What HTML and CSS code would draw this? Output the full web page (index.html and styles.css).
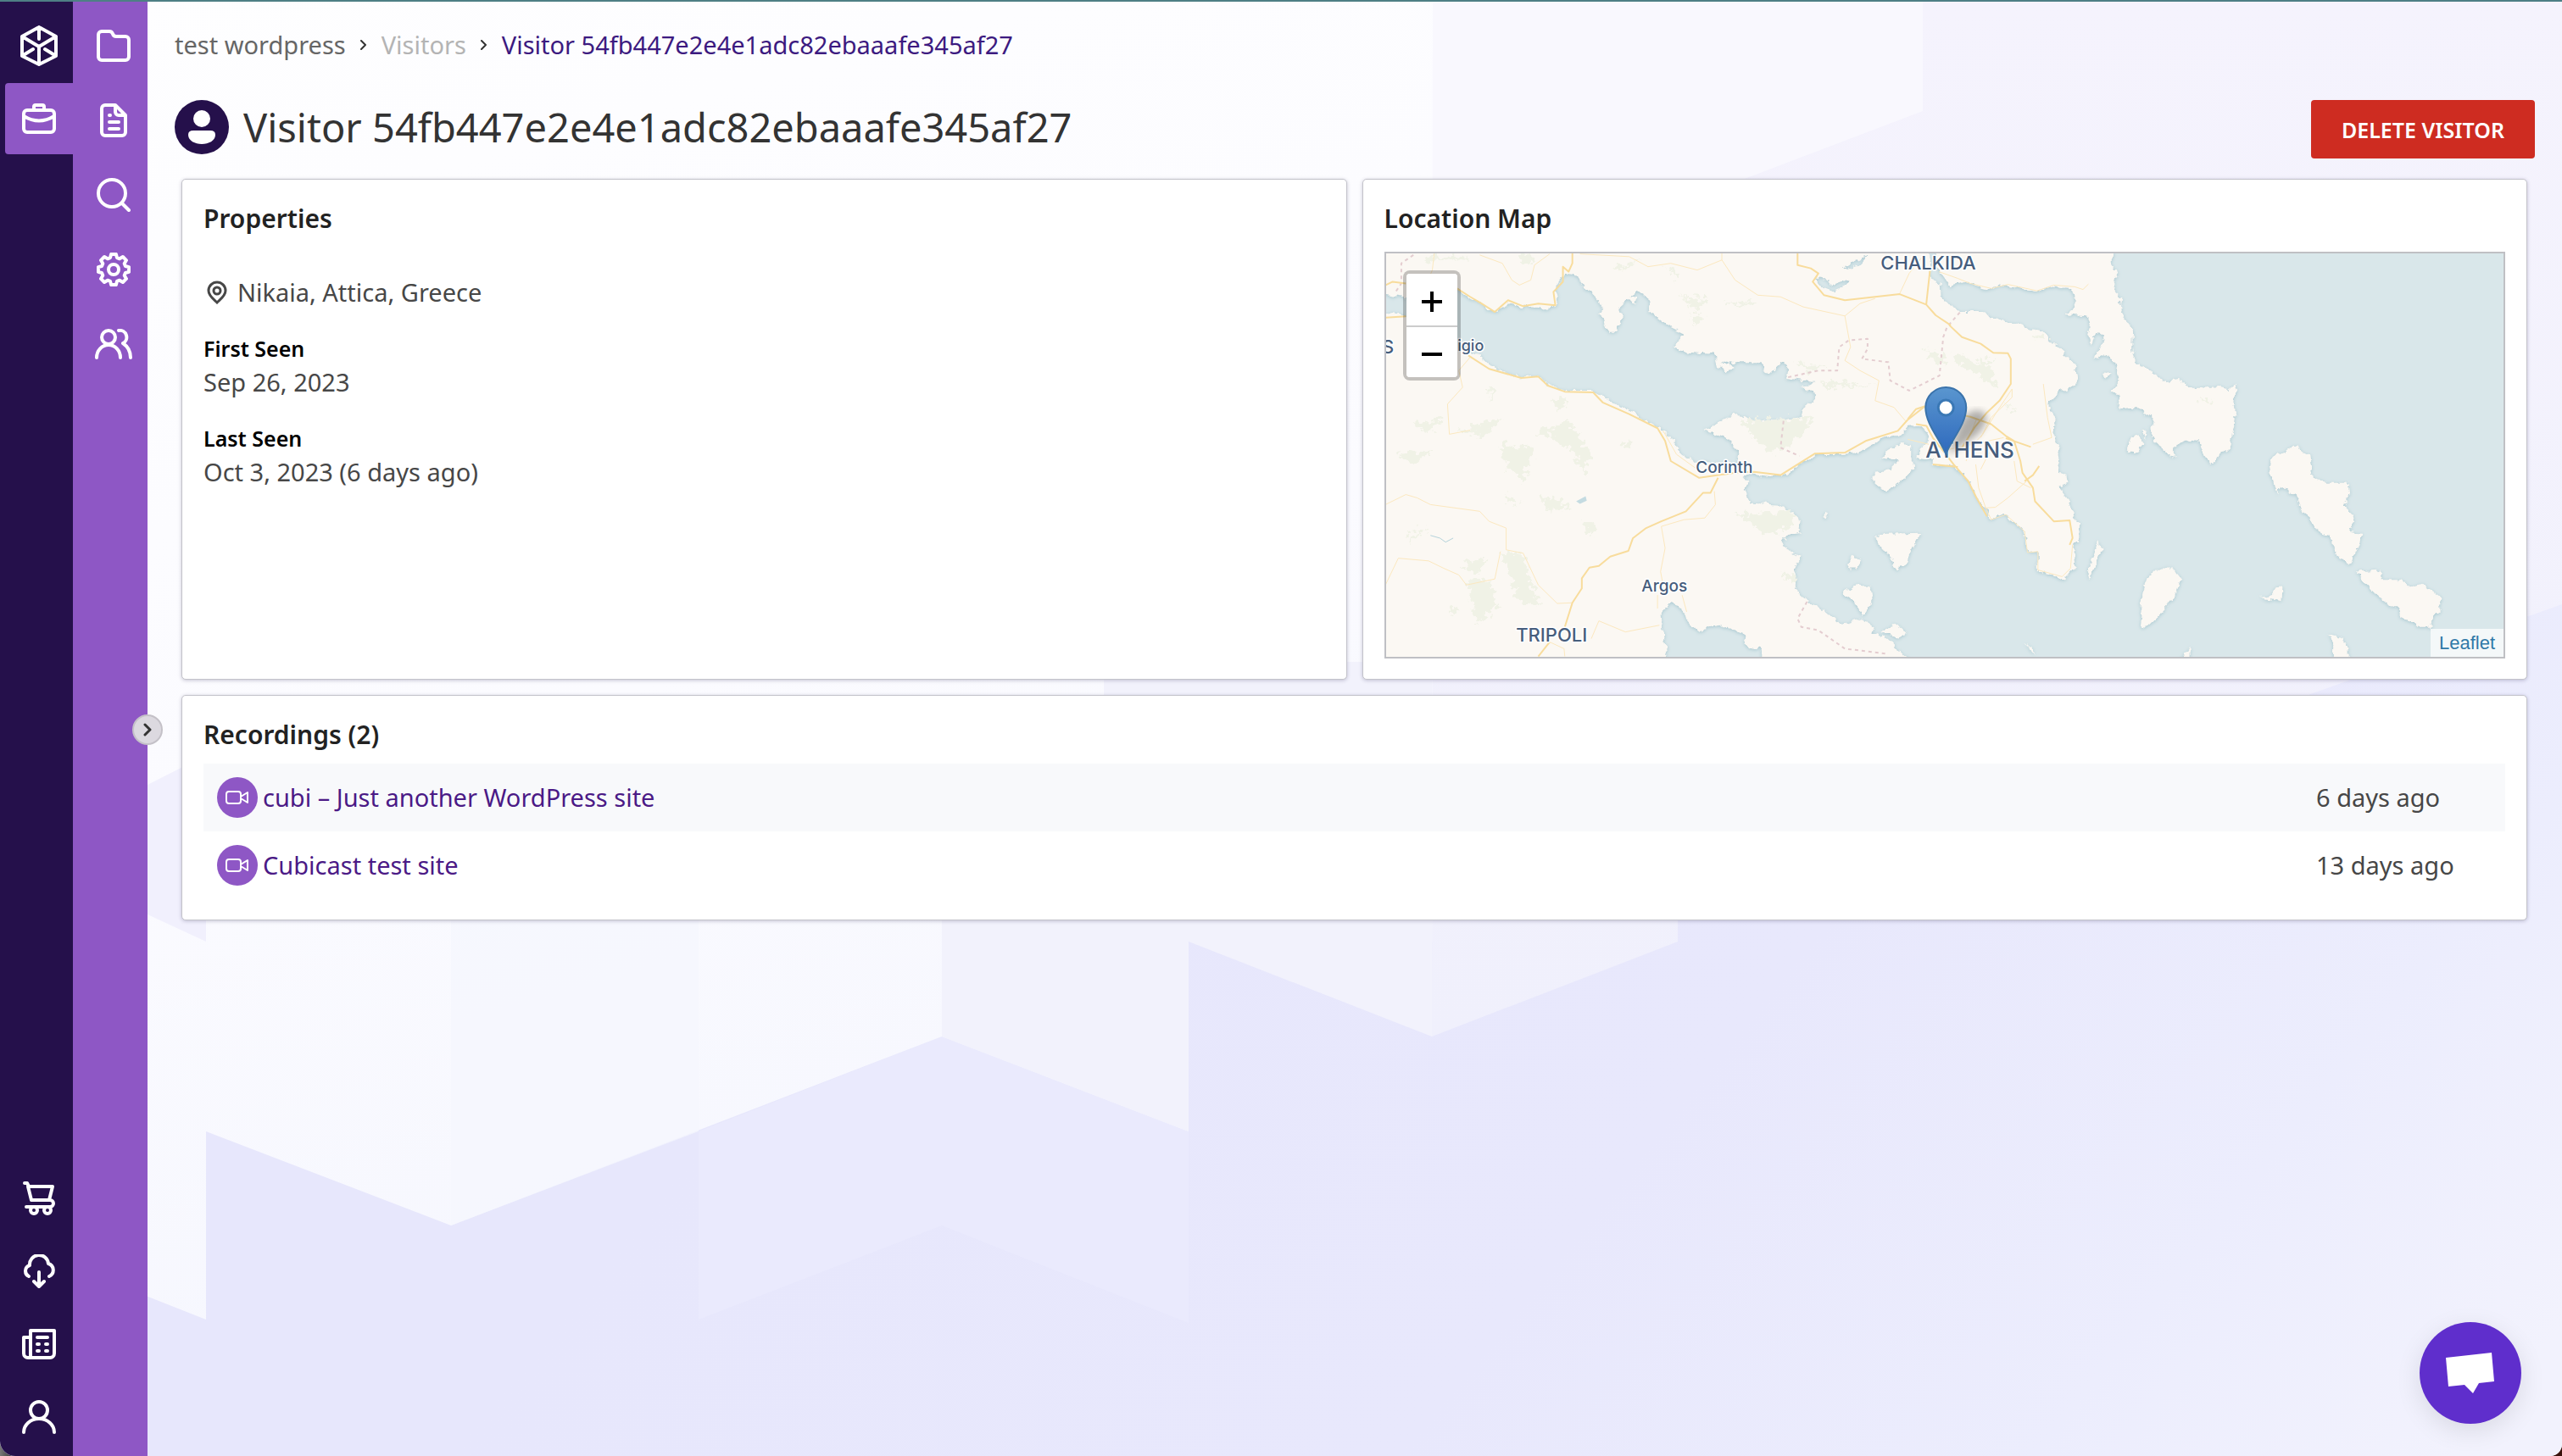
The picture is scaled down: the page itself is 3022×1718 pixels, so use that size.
FILE: index.html
```
<!DOCTYPE html>
<html lang="en">
<head>
<meta charset="utf-8">
<meta name="viewport" content="width=device-width, initial-scale=1">
<title>Visitor 54fb447e2e4e1adc82ebaaafe345af27</title>
<link rel="stylesheet" href="styles.css">
</head>
<body>
<div class="app">
  <svg class="backdrop" viewBox="0 0 3022 1718" preserveAspectRatio="xMidYMid slice" aria-hidden="true">
    <defs>
      <linearGradient id="base" gradientUnits="userSpaceOnUse" x1="1500" y1="500" x2="3022" y2="1718">
        <stop offset="0" stop-color="#e7e7fc"/><stop offset="0.45" stop-color="#e8e8fc"/><stop offset="0.75" stop-color="#ecedfd"/><stop offset="0.95" stop-color="#f2f2fd"/>
      </linearGradient>
      <linearGradient id="sky" x1="0" y1="0" x2="0.3" y2="1">
        <stop offset="0" stop-color="#fefeff"/><stop offset="0.6" stop-color="#fbfbff"/><stop offset="1" stop-color="#f6f7fe"/>
      </linearGradient>
      <linearGradient id="skyRight" x1="0" y1="0" x2="0" y2="1">
        <stop offset="0" stop-color="#f5f3fd"/><stop offset="1" stop-color="#f0f0fc"/>
      </linearGradient>
    </defs>
    <path fill="url(#base)" d="M0 0H3022V1718H0z"/>
    <path fill="#eaeafd" d="M824 1334 1111 1222 1402 1334V1560L1111 1445 824 1556z"/>
    <path fill="url(#sky)" d="M0 0H1690V1110L1402 1110V1334L1111 1222 532 1445 243 1334V1556L0 1460z"/>
    <path fill="#f2f2fc" d="M1111 1085H1402V1334L1111 1222z"/>
    <path fill="#f2f2fc" d="M1302 1075 1402 1110 1689 1222V780H1302z"/>
    <path fill="url(#skyRight)" d="M1690 0H3022V712L1979 1085V1110L1689 1222z"/>
    <path fill="#f9f8fe" d="M1690 0H2268V130L1690 350z"/>
    <path fill="#f1f0fd" d="M174 925 243 890V1110L174 1078z"/>
    <path fill="#f5f6fd" d="M532 1085H824V1334L532 1445z" opacity="0.7"/>
  </svg>

  <nav class="rail" aria-label="Workspace">
    <a class="rail-logo" href="#" aria-label="Home">
      <svg class="icon" width="46" height="48" viewBox="0 0 46 48"><path d="M23 2 43 13V36L23 46 3 36V13zM3 13 23 25 43 13M23 25V46M23 2V16M3 36 16 28M43 36 30 28"/></svg>
    </a>
    <a class="rail-tab" href="#" aria-label="Projects">
      <svg class="icon" width="40" height="36" viewBox="0 0 40 36"><path d="M6 8H34A4 4 0 0 1 38 12V30A4 4 0 0 1 34 34H6A4 4 0 0 1 2 30V12A4 4 0 0 1 6 8zM14 8V4A2 2 0 0 1 16 2H24A2 2 0 0 1 26 4V8M2 15Q20 26 38 15"/></svg>
    </a>
    <div class="rail-bottom">
      <a class="rail-item" href="#" aria-label="Billing"><svg class="icon" width="40" height="40" viewBox="0 0 40 40"><path d="M3 2H6L8 6H36L32 22H11L7 6M32 22H33A4 4 0 0 1 33 30H5"/><circle cx="14" cy="34" r="4"/><circle cx="30" cy="34" r="4"/></svg></a>
      <a class="rail-item" href="#" aria-label="Downloads"><svg class="icon" width="40" height="40" viewBox="0 0 40 40"><path d="M8 26A7 7 0 0 1 9 13A11 11 0 0 1 31 11A8 8 0 0 1 32 26M20 21V37M14 32 20 38 26 32"/></svg></a>
      <a class="rail-item" href="#" aria-label="News"><svg class="icon" width="40" height="36" viewBox="0 0 40 36"><path d="M10 34V2H38V29A5 5 0 0 1 33 34H7A5 5 0 0 1 2 29V10H10M18 10H30M18 18H20M28 18H30M18 26H20M28 26H30"/></svg></a>
      <a class="rail-item" href="#" aria-label="Account"><svg class="icon" width="40" height="40" viewBox="0 0 40 40"><circle cx="20" cy="12" r="10"/><path d="M2 38A18 16 0 0 1 38 38"/></svg></a>
    </div>
  </nav>

  <nav class="subrail" aria-label="Project">
    <a class="subrail-item" href="#" aria-label="Files"><svg class="icon" width="40" height="38" viewBox="0 0 40 38"><path d="M6 2H15Q18 2 19 5T23 8H34A4 4 0 0 1 38 12V32A4 4 0 0 1 34 36H6A4 4 0 0 1 2 32V6A4 4 0 0 1 6 2z"/></svg></a>
    <a class="subrail-item" href="#" aria-label="Documents"><svg class="icon" width="32" height="40" viewBox="0 0 32 40"><path d="M6 2H18L30 14V34A4 4 0 0 1 26 38H6A4 4 0 0 1 2 34V6A4 4 0 0 1 6 2zM18 2V10A4 4 0 0 0 22 14H30M11 14H12M11 22H22M11 30H22"/></svg></a>
    <a class="subrail-item" href="#" aria-label="Search"><svg class="icon" width="40" height="40" viewBox="0 0 40 40"><circle cx="18" cy="18" r="16"/><path d="M30 30 38 38"/></svg></a>
    <a class="subrail-item" href="#" aria-label="Settings"><svg class="icon" width="40" height="40" viewBox="-20 -20 40 40"><path d="M-4-13.9-2.9-18.1H2.9L4-13.9 7-12.7 10.9-15 15-10.9 12.7-7 13.9-4 18.1-2.9V2.9L13.9 4 12.7 7 15 10.9 10.9 15 7 12.7 4 13.9 2.9 18.1H-2.9L-4 13.9-7 12.7-10.9 15-15 10.9-12.7 7-13.9 4-18.1 2.9V-2.9L-13.9-4-12.7-7-15-10.9-10.9-15-7-12.7z"/><circle r="6"/></svg></a>
    <a class="subrail-item" href="#" aria-label="Team"><svg class="icon" width="44" height="36" viewBox="0 0 44 36"><circle cx="16" cy="10" r="8"/><path d="M2 34A14 15 0 0 1 30 34M28 2A8 8 0 0 1 33 17Q42 23 42 34"/></svg></a>
    <button class="expand" type="button" aria-label="Expand menu"><svg width="10" height="16" viewBox="0 0 10 16"><path d="M2 2 8 8 2 14"/></svg></button>
  </nav>

  <main class="main">
    <nav class="crumbs" aria-label="Breadcrumb">
      <a class="crumb" href="#">test wordpress</a>
      <svg class="crumb-sep" width="8" height="12" viewBox="0 0 8 12"><path d="M1 1 6 6 1 11"/></svg>
      <a class="crumb crumb-muted" href="#">Visitors</a>
      <svg class="crumb-sep" width="8" height="12" viewBox="0 0 8 12"><path d="M1 1 6 6 1 11"/></svg>
      <a class="crumb crumb-current" href="#" aria-current="page">Visitor 54fb447e2e4e1adc82ebaaafe345af27</a>
    </nav>

    <header class="page-head">
      <svg width="64" height="64" viewBox="0 0 64 64" aria-hidden="true"><circle cx="32" cy="32" r="32" fill="#25104b"/><circle cx="32" cy="22" r="10" fill="#fff"/><path fill="#fff" d="M22 36H42Q48 36 48 41C48 48 40 52 32 52S16 48 16 41Q16 36 22 36z"/></svg>
      <h1 class="page-title">Visitor 54fb447e2e4e1adc82ebaaafe345af27</h1>
      <button class="delete" type="button">DELETE VISITOR</button>
    </header>

    <div class="cards">
      <section class="card">
        <h2 class="card-title">Properties</h2>
        <p class="place"><svg width="24" height="28" viewBox="0 0 24 28" aria-hidden="true"><path d="M12 2A10 10 0 0 1 22 12C22 18 16 22 12 26C8 22 2 18 2 12A10 10 0 0 1 12 2z"/><circle cx="12" cy="12" r="4"/></svg>Nikaia, Attica, Greece</p>
        <dl class="facts">
          <dt>First Seen</dt><dd>Sep 26, 2023</dd>
          <dt>Last Seen</dt><dd>Oct 3, 2023 (6 days ago)</dd>
        </dl>
      </section>

      <section class="card">
        <h2 class="card-title">Location Map</h2>
        <div class="map">
          <svg class="map-art" viewBox="0 0 1320 476" preserveAspectRatio="xMidYMid slice" role="img" aria-label="Map centred on Athens">
            <defs>
              <filter id="coast" x="-2%" y="-2%" width="104%" height="104%">
                <feTurbulence type="fractalNoise" baseFrequency="0.11" numOctaves="3" seed="4" result="n"/>
                <feDisplacementMap in="SourceGraphic" in2="n" scale="9" xChannelSelector="R" yChannelSelector="G" result="land"/>
                <feDropShadow in="land" dx="0" dy="1" stdDeviation="2" flood-color="#a9c8d0"/>
              </filter>
              <filter id="rough" x="-5%" y="-5%" width="110%" height="110%">
                <feTurbulence type="fractalNoise" baseFrequency="0.06" numOctaves="3" seed="9" result="n"/>
                <feDisplacementMap in="SourceGraphic" in2="n" scale="46" xChannelSelector="R" yChannelSelector="G"/>
              </filter>
              <filter id="soft"><feGaussianBlur stdDeviation="4"/></filter>
              <linearGradient id="pin" x1="0" y1="0" x2="0" y2="1"><stop offset="0" stop-color="#5a96cf"/><stop offset="1" stop-color="#2e69bd"/></linearGradient>
            </defs>
            <path fill="#d9e7ea" d="M0 0H1320V476H0z"/>
            <g filter="url(#coast)" fill="#fbf8f3">
              <g transform="translate(-34 -99) scale(.4464 .3954)">
                <path fill-rule="evenodd" d="M40 220H1500V765L1455 768 1430 795 1400 795 1350 830 1330 845 1280 850 1210 850 1130 915 1085 915 1050 908 1020 912 1040 928 1025 955 1040 995 1110 1000 1150 1020 1172 1050 1170 1085 1140 1090 1125 1110 1135 1135 1170 1155 1155 1190 1165 1215 1160 1255 1190 1285 1240 1320 1280 1360 1320 1345 1335 1340 1365 1365 1360 1385 1395 1395 1430 1430 1470 1480H1075L1065 1425 1035 1435 1020 1385 975 1360 920 1370 905 1380 870 1340 860 1305 830 1295 803 1325 805 1360 815 1400 823 1480H40z
                M40 365 95 375 130 383 150 350 265 360 300 385 330 400 365 430 400 400 440 410 520 415 535 380 525 360 550 310 580 315 600 345 620 370 650 405 640 430 655 445 665 485 690 485 690 465 705 445 695 410 720 385 735 405 740 385 725 380 745 365 770 380 780 430 820 465 865 490 840 530 870 545 930 550 945 545 955 595 975 570 1000 575 1065 575 1090 612 1125 575 1145 600 1135 622 1210 635 1175 655 1205 665 1210 690 1180 715 1175 735 1100 755 1050 750 1010 735 995 730 915 780 970 795 1010 840 1002 875 890 872 850 835 830 800 790 765 750 740 690 700 620 660 550 660 500 640 480 615 435 620 385 600 350 585 320 550 265 530 130 435 95 425 40 440z
                M1210 320 1240 325 1255 345 1305 325 1290 350 1260 365 1225 350zM1285 295 1320 270 1350 262 1330 285 1290 300z"/>
                <path d="M1435 818 1465 825 1465 865 1470 890 1440 930 1400 960 1365 935 1365 905 1410 895 1435 870 1430 860 1385 865 1400 840zM1375 1090 1490 1087 1465 1140 1450 1185 1425 1192 1410 1150 1385 1135zM1310 1155 1333 1165 1320 1190 1298 1190zM1285 1265 1320 1240 1360 1245 1365 1280 1345 1320 1335 1333 1320 1295zM1385 1380 1420 1355 1455 1380 1430 1395zM960 585 985 575 1000 595 975 600zM1228 1035 1245 1025 1238 1040z"/>
                <g transform="translate(1456 0) scale(1.103 1)">
                  <path d="M-30 240H50L55 330 78 340 80 380 95 400 130 425 185 425 195 440 215 440 235 458 270 465 290 475 325 485 350 520 385 560 405 585 395 600 408 620 395 650 370 660 340 695 340 720 352 740 350 790 360 830 365 870 360 905 380 910 385 935 360 945 385 985 390 1010 400 1040 412 1055 410 1110 397 1120 403 1185 385 1205 375 1220 340 1210 312 1200V1140L287 1143 280 1080 265 1060 235 1030 215 1030 200 1050 187 1010 165 980 148 930 120 895 100 885 60 880V865L25 860 28 835 45 815 50 790 30 765-30 765z"/>
                  <path d="M68 220H492L488 270 502 320 490 355 512 380 508 420 540 480 538 540 550 580 595 610 610 635 645 627 690 655 750 650 770 655 790 635 780 690 785 750 770 830 725 875 705 840 700 815 665 803 640 825 638 860 600 825 582 780 592 750 560 715 505 710 510 680 488 665 508 630 495 570 470 550 445 565 470 510 468 490 450 488 440 520 430 490 440 465 435 440 375 432 400 415 398 370 390 355 350 348 310 365 270 355 220 345 200 358 130 333 100 345 80 310 68 290z"/>
                  <path d="M527 840 535 800 555 795 563 820 550 843zM563 780 572 778 568 802zM468 608 482 610 474 630zM865 880 870 860 935 822 938 840 965 855 972 920 1000 935H1055L1058 970 1045 1000 1073 1035 1060 1080 1090 1085 1075 1140 1055 1180 1030 1150 1010 1090 985 1080 965 1040 945 1020 930 975 895 950 882 965zM1075 1200 1130 1195 1140 1225H1180L1200 1245 1235 1240 1280 1275 1275 1310 1260 1330 1255 1365H1230L1180 1335 1175 1310 1130 1280 1100 1240zM555 1300 575 1220 600 1190H635L655 1220 640 1275 600 1330 565 1372 558 1365 562 1310zM840 1278 870 1270 880 1250 900 1248 898 1288zM460 1105 464 1135 437 1222 432 1195zM1005 1388 1045 1400 1055 1430V1480H1018L1020 1410zM645 1480 675 1425V1480zM282 1412 308 1443 295 1440z"/>
                </g>
              </g>
            </g>
            <g class="woods" filter="url(#rough)" transform="translate(-34 -99) scale(.4464 .3954)">
              <path d="M180 260h110v12h-110zM430 255h40v25h-40zM680 290 760 270 700 300zM815 290 860 310 850 330zM860 380 930 385 900 430zM980 395h80v8h-80zM880 430 920 440 890 460zM270 780 380 740 340 800zM480 780 560 750 620 850 600 910 570 840zM380 820 470 830 440 930 400 890zM110 850 200 840 150 880zM150 760 230 740 190 790zM490 970 580 1010 500 1020zM390 960 430 1000 400 1000zM600 1050 630 1060 620 1100zM1010 750 1210 740 1150 820 1090 850zM1000 1030 1160 1020 1150 1060 1090 1090zM1150 580 1250 590 1200 600zM1220 630 1370 645 1240 650zM1500 540 1560 550 1540 590zM130 1090 190 1070 140 1110zM280 1170 350 1160 310 1210zM380 1140 440 1150 480 1300 430 1290zM290 1230 350 1220 370 1300 320 1360zM240 1300 270 1310 250 1330zM520 690 560 680 530 730zM350 650h10v30h-10zM1120 1200 1160 1210 1150 1240zM700 810h20v20h-20z"/>
              <path d="M1570 560 1600 555 1680 600 1690 650 1620 600zM1640 560 1680 570 1660 590zM1710 700 1740 710 1720 720zM1790 490h30v12h-30zM2225 680 2270 690 2240 695z"/>
            </g>
            <g transform="translate(-34 -99) scale(.4464 .3954)">
              <path class="water" d="M580 990 605 975 608 988 590 998z"/>
              <path class="stream" d="M195 1092 220 1100 235 1112 255 1100"/>
              <path class="border" d="M150 255 118 280 118 340 100 370M1140 620 1220 600 1270 600 1275 530 1300 510 1350 505 1350 535 1335 565 1405 575 1410 630 1460 660 1540 615 1550 500 1560 470 1595 425M1128 750 1120 830 1170 855M1190 1290 1165 1340 1175 1365 1220 1375 1290 1430 1400 1445"/>
              <path class="lane" d="M205 250 200 300 185 340M325 255 385 280 410 330 430 345 460 330 470 285 510 252M590 252 720 260 770 290 830 280 900 300 965 270 1000 330 1060 375 1120 380 1180 410 1290 437 1330 400 1370 385M1290 437 1305 530 1290 570 1330 600 1380 630 1370 690 1420 710 1450 750M965 250V270M1435 370 1460 310 1495 260M76 1000 130 970 160 980 195 1000 325 1020 350 1050 395 1070V1135L440 1145 480 1240 530 1295 570 1293M76 1240 110 1160 190 1168 230 1190 270 1210 290 1240 365 1222 380 1140M300 560 270 600 280 650 240 700 245 790 300 778M945 960 948 1000 920 1040 865 1045 805 1065 815 1130 803 1200 808 1230M795 1270 795 1310M860 1270 872 1320M550 1453 548 1430 510 1410M620 1400 640 1347 710 1380 800 1360M810 780 845 850 900 895"/>
              <path class="road" d="M76 345 95 335 130 340M265 355 300 380 330 400 365 425 400 390 440 408 480 400 525 405 520 365 545 335 545 290 560 305 570 280V250M76 442 130 438M295 555 350 595 435 622 480 618 505 645 550 663 625 665 650 695 720 730 795 772 815 810 830 870 905 920 1000 905 1050 902 1120 912 1210 848 1290 845 1345 810 1430 780 1455 748 1500 708M955 920 935 965 915 965 870 1020 805 1050 765 1070 730 1100 718 1138 670 1155 640 1183 615 1188 595 1220 595 1250 570 1293 550 1365M510 1410 480 1453M1165 250V285L1200 295 1220 310 1205 335 1235 375 1290 390 1435 372 1505 403 1515 300M1505 403 1530 435 1570 465"/>
              <g transform="translate(1456 0) scale(1.103 1)">
                <path class="lane" d="M75 305 120 325 150 340 200 355 240 343 310 362 350 345 400 350 420 358 433 342M325 640 335 740 345 800 300 820M250 655 215 720 180 790 150 830 140 870M165 745 140 820M250 655V680L200 740 175 800M0 805 100 835 230 800M163 880 170 950 187 1010 210 1008 240 980 285 930M255 870 262 930 295 950M195 845 175 895M312 1140 287 1143 280 1080 235 1030 200 1045 187 1010M312 1140V1195L370 1215 390 1190 395 1120"/>
                <path class="road" d="M100 465 130 500 175 520 205 547 240 548 247 565V640L220 690 190 725 160 770 130 830M0 745 20 715 45 705 100 725 150 738 200 760 235 795 255 810 270 870 275 905 300 950 305 990 350 1050 388 1047 395 1100 388 1120M235 802 295 828M315 885 300 912 280 930M20 760 45 765 60 800 110 880 145 930 165 980 190 1035M60 880 120 888"/>
              </g>
            </g>
            <g class="places">
              <text x="10" y="118" text-anchor="end" font-size="22">S</text>
              <text x="116" y="115" text-anchor="end" font-size="18">Aigio</text>
              <text x="584" y="19" font-size="22">CHALKIDA</text>
              <text x="366" y="259" font-size="19">Corinth</text>
              <text x="302" y="399" font-size="19">Argos</text>
              <text x="154" y="458" font-size="22">TRIPOLI</text>
              <text x="637" y="241" font-size="26">ATHENS</text>
            </g>
            <path filter="url(#soft)" fill="#000" opacity=".3" d="M663 238 680 196Q694 180 706 188 714 198 698 214z"/>
            <path fill="url(#pin)" stroke="#3a73ab" stroke-width="2" d="M661 237C656 222 637 202 637 182A24 24 0 0 1 685 182C685 202 666 222 661 237z"/>
            <circle cx="661" cy="182" r="9" fill="#fff" stroke="#3a78b5" stroke-width="3"/>
          </svg>
          <div class="zoom">
            <button class="zoom-btn" type="button" aria-label="Zoom in"><svg width="26" height="26" viewBox="0 0 26 26"><path d="M13 1V25M1 13H25"/></svg></button>
            <button class="zoom-btn" type="button" aria-label="Zoom out"><svg width="26" height="26" viewBox="0 0 26 26"><path d="M1 13H25"/></svg></button>
          </div>
          <a class="credit" href="#">Leaflet</a>
        </div>
      </section>

      <section class="card card-wide">
        <h2 class="card-title">Recordings (2)</h2>
        <table class="records">
          <tbody>
            <tr>
              <td><a class="record" href="#"><svg width="48" height="48" viewBox="0 0 48 48" aria-hidden="true"><circle cx="24" cy="24" r="24" fill="#8e57c5"/><path d="M14 17H25Q28 17 28 20V28Q28 31 25 31H14Q11 31 11 28V20Q11 17 14 17zM28 23 36 18V30L28 25"/></svg>cubi – Just another WordPress site</a></td>
              <td class="when">6 days ago</td>
            </tr>
            <tr>
              <td><a class="record" href="#"><svg width="48" height="48" viewBox="0 0 48 48" aria-hidden="true"><circle cx="24" cy="24" r="24" fill="#8e57c5"/><path d="M14 17H25Q28 17 28 20V28Q28 31 25 31H14Q11 31 11 28V20Q11 17 14 17zM28 23 36 18V30L28 25"/></svg>Cubicast test site</a></td>
              <td class="when">13 days ago</td>
            </tr>
          </tbody>
        </table>
      </section>
    </div>
  </main>

  <button class="chat" type="button" aria-label="Open chat"><svg width="60" height="50" viewBox="0 0 60 50"><path fill="#fff" d="M1 7 55 1 58 35 40 37 33 49 23 39 4 41z"/></svg></button>
</div>
</body>
</html>
```
FILE: styles.css
```
* { box-sizing: border-box; }

html {
  min-height: 100%;
  background: linear-gradient(90deg, #777 0, #222 20px, #3a120c 100%);
}

body {
  margin: 0;
  font-family: "Noto Sans", "Open Sans", sans-serif;
  font-size: 29px;
  line-height: 40px;
  color: #474747;
}

a { color: inherit; text-decoration: none; }
button { font: inherit; cursor: pointer; }
svg { display: block; flex: none; }
h1, h2, p, dl, dd { margin: 0; }

.app {
  position: relative;
  display: flex;
  min-height: 100vh;
  border-top: 2px solid #4e7f85;
  border-radius: 0 0 14px 18px;
  overflow: hidden;
  background: #f3f3fd;
}

.backdrop { position: absolute; inset: 0; width: 100%; height: 100%; }

.icon {
  fill: none;
  stroke: #fff;
  stroke-width: 4;
  stroke-linecap: round;
  stroke-linejoin: round;
}

/* Primary rail */
.rail {
  position: relative;
  display: flex;
  flex-direction: column;
  width: 86px;
  background: #25104b;
}
.rail-logo, .rail-tab, .rail-item, .subrail-item {
  display: flex;
  align-items: center;
  justify-content: center;
}
.rail-logo { height: 96px; padding: 8px 0 0 6px; }
.rail-tab {
  height: 84px;
  margin-left: 6px;
  border-radius: 4px 0 0 4px;
  background: #8e57c5;
}
.rail-bottom { margin-top: auto; padding-bottom: 3px; }
.rail-item { height: 86px; padding-left: 6px; }

/* Project rail */
.subrail {
  position: relative;
  z-index: 1;
  width: 88px;
  padding-top: 8px;
  background: #8e57c5;
}
.subrail-item { height: 88px; padding-left: 8px; }
.expand {
  position: absolute;
  top: 841px;
  right: -18px;
  display: flex;
  align-items: center;
  justify-content: center;
  width: 36px;
  height: 36px;
  padding: 0;
  border: 2px solid #c4c1c8;
  border-radius: 50%;
  background: #dcd9e0;
}
.expand path, .crumb-sep path {
  fill: none;
  stroke: #333;
  stroke-width: 3;
  stroke-linecap: round;
  stroke-linejoin: round;
}
.crumb-sep path { stroke-width: 2; }

/* Page */
.main {
  position: relative;
  flex: 1;
  min-width: 0;
  padding: 31px 32px 40px;
}
.crumbs { display: flex; align-items: center; gap: 17px; }
.crumb { color: #666; }
.crumb-muted { color: #b4b4b4; }
.crumb-current { color: #3c1a80; }

.page-head {
  display: flex;
  align-items: flex-start;
  gap: 17px;
  margin: 45px 0 24px;
}
.page-title {
  flex: 1;
  font-size: 47px;
  line-height: 64px;
  font-weight: 400;
  color: #333;
}
.delete {
  height: 69px;
  padding: 0 36px;
  border: 0;
  border-radius: 4px;
  background: #ce2c21;
  color: #fff;
  font-size: 25px;
  font-weight: 600;
}

.cards {
  display: grid;
  grid-template-columns: 1fr 1fr;
  gap: 18px;
  margin: 0 9px 0 8px;
}
.card {
  padding: 26px 25px 24px;
  border: 1px solid #c3c3ca;
  border-radius: 5px;
  background: #fff;
  box-shadow: 0 1px 4px rgba(40, 30, 80, 0.25);
}
.card-wide { grid-column: 1 / -1; }
.card-title {
  font-size: 30px;
  line-height: 40px;
  font-weight: 600;
  color: #222;
}

.place {
  display: flex;
  align-items: center;
  gap: 12px;
  margin-top: 47px;
  padding-left: 4px;
}
.place svg { fill: none; stroke: #474747; stroke-width: 3; }

.facts dt {
  margin-top: 26px;
  font-size: 25px;
  font-weight: 600;
  color: #000;
}
.facts dd { margin-bottom: 26px; }

/* Map */
.map {
  position: relative;
  height: 480px;
  margin-top: 19px;
  border: 2px solid #bfc0c4;
  overflow: hidden;
}
.map-art { width: 100%; height: 100%; }
.woods { fill: #f0f2e6; }
.water { fill: #c4dbe1; }
.stream, .border, .lane, .road {
  fill: none;
  stroke-linejoin: round;
  vector-effect: non-scaling-stroke;
}
.stream { stroke: #b5d3db; stroke-width: 1; }
.border { stroke: #e4cdd0; stroke-width: 2; stroke-dasharray: 4 4; }
.lane { stroke: #fbe8bf; stroke-width: 1; }
.road { stroke: #f8dc9c; stroke-width: 2; }
.places {
  font-family: Inter, "Open Sans", sans-serif;
  font-weight: 500;
  fill: #465d7c;
  stroke: #fff;
  stroke-width: 3;
  stroke-linejoin: round;
  paint-order: stroke;
}
.zoom {
  position: absolute;
  top: 20px;
  left: 20px;
  width: 68px;
  border: 4px solid rgba(0, 0, 0, 0.22);
  border-radius: 8px;
  background-clip: padding-box;
  background-color: #fff;
}
.zoom-btn {
  display: flex;
  align-items: center;
  justify-content: center;
  width: 100%;
  height: 61px;
  padding: 4px 0 0;
  border: 0;
  border-radius: 4px;
  background: #fff;
}
.zoom-btn + .zoom-btn { border-top: 2px solid #ccc; border-radius: 0 0 4px 4px; }
.zoom-btn path { stroke: #000; stroke-width: 4; }
.credit {
  position: absolute;
  right: 0;
  bottom: 0;
  padding: 0 10px;
  background: rgba(255, 255, 255, 0.7);
  color: #3079a8;
  font-family: "Liberation Sans", sans-serif;
  font-size: 22px;
  line-height: 33px;
}

/* Recordings */
.records {
  width: 100%;
  margin-top: 14px;
  border-collapse: collapse;
}
.records tr:nth-child(odd) { background: #f8f9fb; }
.records td { height: 80px; padding: 0 0 0 16px; }
.records .when { width: 239px; }
.record {
  display: flex;
  align-items: center;
  gap: 6px;
  color: #4b1a86;
}
.record path { fill: none; stroke: #fff; stroke-width: 2; stroke-linejoin: round; }

.chat {
  position: fixed;
  right: 48px;
  bottom: 38px;
  display: flex;
  align-items: center;
  justify-content: center;
  width: 120px;
  height: 120px;
  padding: 0;
  border: 0;
  border-radius: 50%;
  background: #5f2ecc;
  box-shadow: 0 8px 30px rgba(0, 0, 0, 0.1);
}
```
